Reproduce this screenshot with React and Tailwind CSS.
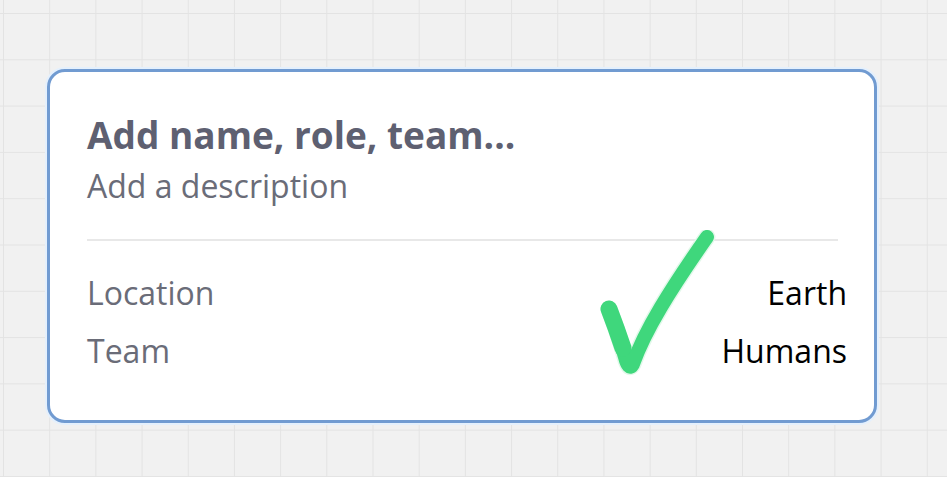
export default function App() {
  return (
    <div
      className="w-[947px] h-[477px] overflow-hidden bg-[#f1f1f1] bg-[linear-gradient(to_right,#e3e3e3_1px,transparent_1px),linear-gradient(to_bottom,#e3e3e3_1px,transparent_1px)] bg-[length:46.2px_46.3px] bg-[position:3px_13px] pt-[69px] pl-[47px]"
      style={{ fontFamily: '"Open Sans", "Noto Sans", sans-serif' }}
    >
      <div className="relative w-[830px] h-[354px] rounded-[18px] border-[3px] border-[#719bd1] bg-white shadow-[0_0_0_2px_#e4f0fd] pl-[37px] pr-[36px] pt-[41px]">
        <div className="text-[37px] font-bold leading-[44px] text-[#5e6071]">Add name, role, team...</div>
        <div className="text-[32px] leading-[40px] text-[#6a6c78] mt-[9px]">Add a description</div>
        <div className="h-[2px] bg-[#e8e8e8] mt-[33px]" />
        <div className="mt-[32px] -mr-[9px] flex justify-between text-[32px] leading-[40px]">
          <span className="text-[#6a6c78]">Location</span>
          <span className="text-black">Earth</span>
        </div>
        <div className="mt-[18px] -mr-[9px] flex justify-between text-[32px] leading-[40px]">
          <span className="text-[#6a6c78]">Team</span>
          <span className="text-black">Humans</span>
        </div>
        <svg className="absolute left-[550px] top-[158px]" width="120" height="150" viewBox="0 0 120 150">
          <path
            d="M9 79 C 14 92, 20 110, 25 127 C 27 135, 30 140, 33 134 C 45 100, 70 60, 107 7"
            fill="none"
            stroke="#e2f8ea"
            strokeWidth="17"
            strokeLinecap="round"
            strokeLinejoin="round"
          />
          <path
            d="M9 79 C 14 92, 20 110, 25 127 C 27 135, 30 140, 33 134 C 45 100, 70 60, 107 7"
            fill="none"
            stroke="#3fd77c"
            strokeWidth="14"
            strokeLinecap="round"
            strokeLinejoin="round"
          />
          <path d="M9 79 C 14 92, 19 106, 23 118" fill="none" stroke="#3fd77c" strokeWidth="17" strokeLinecap="round" />
        </svg>
      </div>
    </div>
  );
}
